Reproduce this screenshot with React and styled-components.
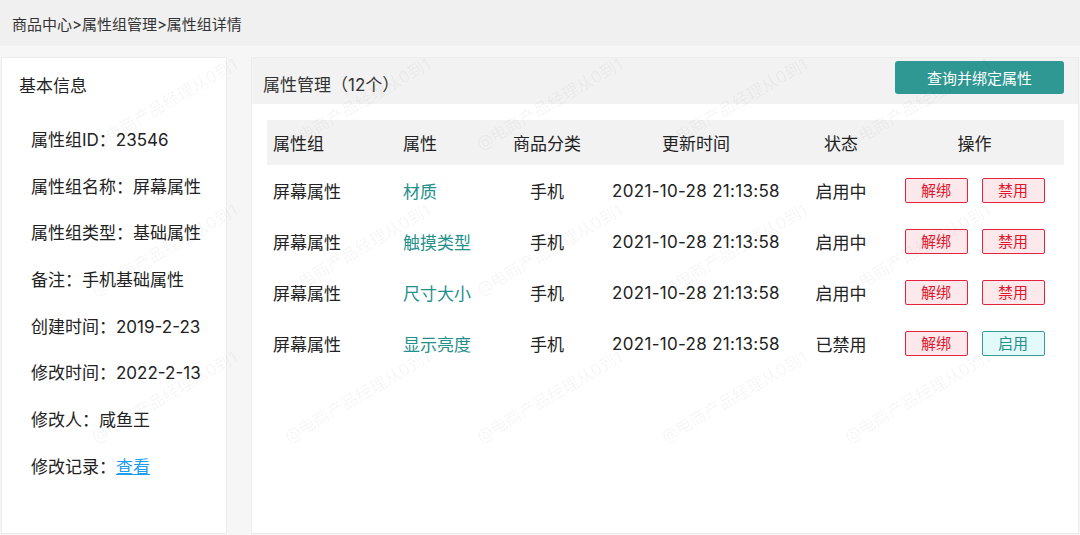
import React from "react";
import styled, { createGlobalStyle } from "styled-components";

const GlobalStyle = createGlobalStyle`
  html, body {
    margin: 0;
    padding: 0;
    height: 100%;
    overflow: hidden;
    background: #f6f6f6;
  }
  body {
    font-family: Inter, "Noto Sans CJK SC", "Noto Sans", sans-serif;
    color: #222;
  }
  #root {
    height: 100%;
  }
`;

const Page = styled.div`
  position: relative;
  height: 100vh;
  display: flex;
  flex-direction: column;
  overflow: hidden;
`;

const TopBar = styled.div`
  height: 46px;
  flex-shrink: 0;
  background: #f0f0f0;
  display: flex;
  align-items: center;
  padding-left: 12px;
  font-size: 15px;
  color: #333;
`;

const Main = styled.div`
  flex: 1;
  display: flex;
  gap: 24px;
  padding: 11px 1px 1px 1px;
  min-height: 0;
`;

const InfoPanel = styled.div`
  width: 226px;
  flex-shrink: 0;
  background: #fff;
  border: 1px solid #ececec;
  box-sizing: border-box;
  padding: 16px 0 0 17px;
`;

const PanelTitle = styled.div`
  font-size: 17px;
  line-height: 24px;
  margin-bottom: 30px;
`;

const InfoList = styled.div`
  display: flex;
  flex-direction: column;
  gap: 22.7px;
  padding-left: 12px;
`;

const InfoItem = styled.div`
  font-size: 17px;
  line-height: 24px;
  white-space: nowrap;
`;

const Link = styled.a`
  color: #1a9cef;
  text-decoration: underline;
  cursor: pointer;
`;

const AttrPanel = styled.div`
  flex: 1;
  background: #fff;
  border: 1px solid #ececec;
  box-sizing: border-box;
  display: flex;
  flex-direction: column;
`;

const AttrHeader = styled.div`
  height: 46px;
  background: #f2f2f2;
  display: flex;
  align-items: center;
  justify-content: space-between;
  padding: 0 14px 0 11px;
`;

const AttrTitle = styled.div`
  font-size: 17px;
  color: #333;
  margin-top: 5px;
`;

const PrimaryButton = styled.button`
  width: 169px;
  height: 33px;
  margin-top: -8px;
  border: none;
  border-radius: 3px;
  background: #2f9893;
  color: #fff;
  font-family: inherit;
  font-size: 15px;
  cursor: pointer;
`;

const Table = styled.div`
  margin: 16px 14px 0 15px;
`;

const cols = "130px 102px 96px 202px 88px 1fr";

const HeadRow = styled.div`
  display: grid;
  grid-template-columns: ${cols};
  height: 45px;
  align-items: center;
  background: #f2f2f2;
`;

const Row = styled.div`
  display: grid;
  grid-template-columns: ${cols};
  height: 51px;
  align-items: center;
`;

const Cell = styled.div`
  font-size: 17px;
  text-align: ${(p) => (p.$center ? "center" : "left")};
  padding-left: ${(p) => (p.$center ? "0" : "6px")};
  color: ${(p) => (p.$accent ? "#24908b" : "#222")};
  letter-spacing: ${(p) => (p.$date ? "0.3px" : "normal")};
  white-space: nowrap;
  display: ${(p) => (p.$actions ? "flex" : "block")};
  justify-content: center;
  gap: 14px;
`;

const TagButton = styled.button`
  width: 63px;
  height: 25px;
  box-sizing: border-box;
  border-radius: 2px;
  font-family: inherit;
  font-size: 15px;
  line-height: 1;
  padding: 0;
  cursor: pointer;
  border: 1px solid ${(p) => (p.$tone === "teal" ? "#3a9e98" : "#e4233c")};
  background: ${(p) => (p.$tone === "teal" ? "#e3fafa" : "#fde8eb")};
  color: ${(p) => (p.$tone === "teal" ? "#2a8d89" : "#e0162d")};
`;

const WatermarkLayer = styled.div`
  position: absolute;
  inset: 0;
  pointer-events: none;
  overflow: hidden;
`;

const Mark = styled.span`
  position: absolute;
  font-size: 16.5px;
  line-height: 1;
  color: rgba(0, 0, 0, 0.055);
  white-space: nowrap;
  transform: rotate(-30deg);
  transform-origin: left bottom;
`;

const info = [
  ["属性组ID：", "23546"],
  ["属性组名称：", "屏幕属性"],
  ["属性组类型：", "基础属性"],
  ["备注：", "手机基础属性"],
  ["创建时间：", "2019-2-23"],
  ["修改时间：", "2022-2-13"],
  ["修改人：", "咸鱼王"],
];

const rows = [
  { attr: "材质", enabled: true },
  { attr: "触摸类型", enabled: true },
  { attr: "尺寸大小", enabled: true },
  { attr: "显示亮度", enabled: false },
];

// watermark grid
const marks = [];
[97, 290, 482, 667, 850].forEach((x) => {
  [153, 299, 446].forEach((y) => marks.push({ x, y }));
});

export default function App() {
  return (
    <Page>
      <GlobalStyle />
      <TopBar>商品中心&gt;属性组管理&gt;属性组详情</TopBar>
      <Main>
        <InfoPanel>
          <PanelTitle>基本信息</PanelTitle>
          <InfoList>
            {info.map(([label, value]) => (
              <InfoItem key={label}>
                {label}
                {value}
              </InfoItem>
            ))}
            <InfoItem>
              修改记录：<Link>查看</Link>
            </InfoItem>
          </InfoList>
        </InfoPanel>
        <AttrPanel>
          <AttrHeader>
            <AttrTitle>属性管理（12个）</AttrTitle>
            <PrimaryButton>查询并绑定属性</PrimaryButton>
          </AttrHeader>
          <Table>
            <HeadRow>
              <Cell>属性组</Cell>
              <Cell>属性</Cell>
              <Cell $center>商品分类</Cell>
              <Cell $center>更新时间</Cell>
              <Cell $center>状态</Cell>
              <Cell $center>操作</Cell>
            </HeadRow>
            {rows.map((r) => (
              <Row key={r.attr}>
                <Cell>屏幕属性</Cell>
                <Cell $accent>{r.attr}</Cell>
                <Cell $center>手机</Cell>
                <Cell $center $date>2021-10-28 21:13:58</Cell>
                <Cell $center>{r.enabled ? "启用中" : "已禁用"}</Cell>
                <Cell $center $actions>
                  <TagButton>解绑</TagButton>
                  {r.enabled ? (
                    <TagButton>禁用</TagButton>
                  ) : (
                    <TagButton $tone="teal">启用</TagButton>
                  )}
                </Cell>
              </Row>
            ))}
          </Table>
        </AttrPanel>
      </Main>
      <WatermarkLayer>
        {marks.map((m) => (
          <Mark key={`${m.x}-${m.y}`} style={{ left: m.x, top: m.y - 17 }}>
            @电商产品经理从0到1
          </Mark>
        ))}
      </WatermarkLayer>
    </Page>
  );
}
